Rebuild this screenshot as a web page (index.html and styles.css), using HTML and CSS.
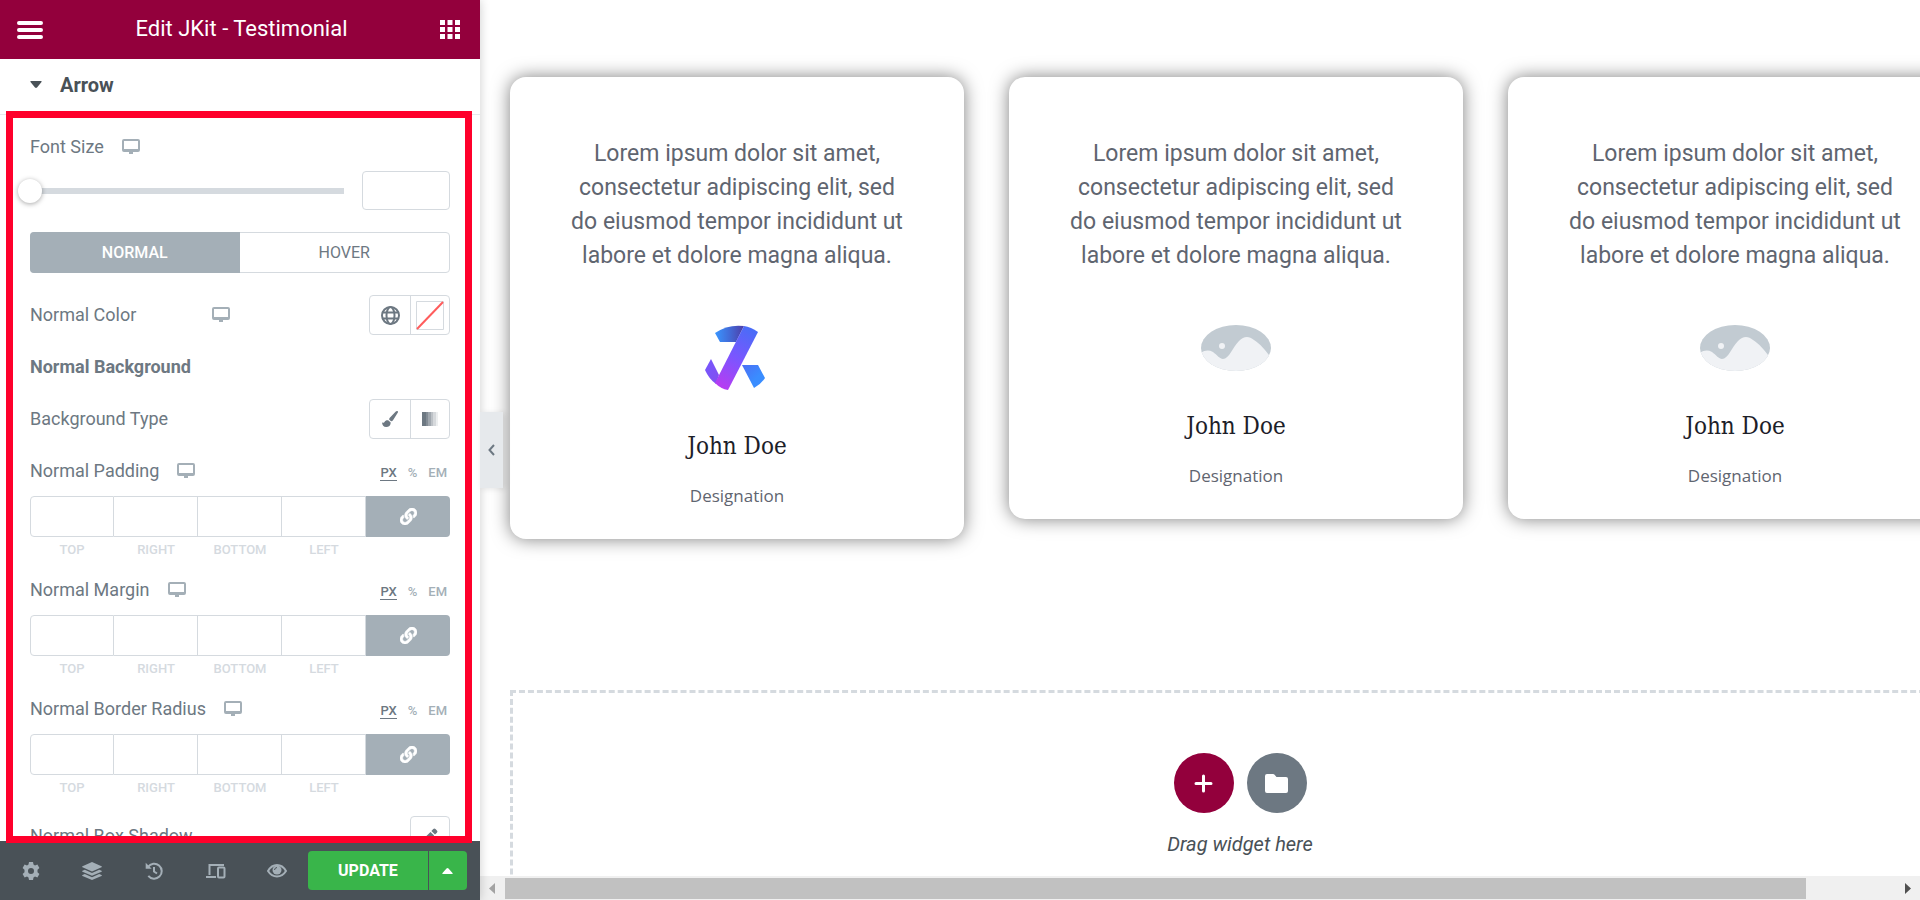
FILE: index.html
```
<!DOCTYPE html>
<html lang="en">
<head>
    <meta charset="UTF-8">
    <meta name="viewport" content="width=device-width, initial-scale=1.0">
    <title>Edit JKit - Testimonial</title>
    <link rel="stylesheet" href="styles.css">
</head>
<body>
    <svg class="sprite" aria-hidden="true">
        <symbol id="i-desktop" viewBox="0 0 18 16">
            <path fill="currentColor" fill-rule="evenodd" d="M2 0h14a2 2 0 0 1 2 2v9a2 2 0 0 1-2 2h-5v2H7v-2H2a2 2 0 0 1-2-2V2a2 2 0 0 1 2-2zm0 2v8h14V2z"/>
        </symbol>
        <symbol id="i-link" viewBox="0 0 512 512">
            <path fill="currentColor" stroke="currentColor" stroke-width="16" d="M326.612 185.391c59.747 59.809 58.927 155.698.36 214.59-.11.12-.24.25-.36.37l-67.2 67.2c-59.27 59.27-155.699 59.262-214.96 0-59.27-59.26-59.27-155.7 0-214.96l37.106-37.106c9.84-9.84 26.786-3.3 27.294 10.606.648 17.722 3.826 35.527 9.69 52.721 1.986 5.822.567 12.262-3.783 16.612l-13.087 13.087c-28.026 28.026-28.905 73.66-1.155 101.96 28.024 28.579 74.086 28.749 102.325.51l67.2-67.19c28.191-28.191 28.073-73.757 0-101.83-3.701-3.694-7.429-6.564-10.341-8.569a16.037 16.037 0 0 1-6.947-12.606c-.396-10.567 3.348-21.456 11.698-29.806l21.054-21.055c5.521-5.521 14.182-6.199 20.584-1.731a152.482 152.482 0 0 1 20.522 17.197zM467.547 44.449c-59.261-59.262-155.69-59.27-214.96 0l-67.2 67.2c-.12.12-.25.25-.36.37-58.566 58.892-59.387 154.781.36 214.59a152.454 152.454 0 0 0 20.521 17.196c6.402 4.468 15.064 3.789 20.584-1.731l21.054-21.055c8.35-8.35 12.094-19.239 11.698-29.806a16.037 16.037 0 0 0-6.947-12.606c-2.912-2.005-6.64-4.875-10.341-8.569-28.073-28.073-28.191-73.639 0-101.83l67.2-67.19c28.239-28.239 74.3-28.069 102.325.51 27.75 28.3 26.872 73.934-1.155 101.96l-13.087 13.087c-4.35 4.35-5.769 10.79-3.783 16.612 5.864 17.194 9.042 34.999 9.69 52.721.509 13.906 17.454 20.446 27.294 10.606l37.106-37.106c59.271-59.259 59.271-155.699.001-214.959z"/>
        </symbol>
        <symbol id="i-placeholder" viewBox="0 0 70 46">
            <clipPath id="oval"><ellipse cx="35" cy="23" rx="35" ry="23"/></clipPath>
            <g clip-path="url(#oval)">
                <path fill="#c2cbd2" d="M0 0h70v46H0z"/>
                <path fill="#f0f2f5" d="M0 28c4-3 8-3 12-1 4 3 7 7 10 7 6 0 10-12 16-18 5-5 10-5 15-1 6 4 11 9 17 18v14H0z"/>
                <circle fill="#f0f2f5" cx="21" cy="21" r="3"/>
            </g>
        </symbol>
    </svg>

    <div class="editor">
        <aside class="panel">
            <header class="panel-header">
                <button class="icon-btn" aria-label="Menu">
                    <svg width="26" height="18" viewBox="0 0 26 18" stroke="currentColor" stroke-width="4" stroke-linecap="round"><path d="M2 2h22M2 9h22M2 16h22"/></svg>
                </button>
                <h1 class="panel-title">Edit JKit - Testimonial</h1>
                <button class="icon-btn" aria-label="Widgets">
                    <svg width="20" height="19" viewBox="0 0 20 19" fill="currentColor"><path d="M0 0h5v5H0zM7.500 0h5v5h-5zM15 0h5v5h-5zM0 7h5v5H0zM7.500 7h5v5h-5zM15 7h5v5h-5zM0 14h5v5H0zM7.500 14h5v5h-5zM15 14h5v5h-5z"/></svg>
                </button>
            </header>

            <button class="section-toggle" aria-expanded="true">
                <svg width="12" height="7" viewBox="0 0 12 7" fill="currentColor"><path d="M1 0h10q1 .3.500 1L7 6.500q-1 .8-2 0L.500 1Q0 .3 1 0z"/></svg>
                Arrow
            </button>

            <div class="controls">
                <div class="control control-slider">
                    <div class="control-head">
                        <label for="fontSize">Font Size</label>
                        <svg class="device"><use href="#i-desktop"/></svg>
                    </div>
                    <div class="slider-row">
                        <input type="range" id="fontSize" class="slider" min="0" max="100" value="0">
                        <input type="text" class="size-input" aria-label="Font size value">
                    </div>
                </div>

                <div class="control tabs">
                    <button class="tab active">NORMAL</button>
                    <button class="tab">HOVER</button>
                </div>

                <div class="control control-inline control-color">
                    <span class="color-label">Normal Color</span>
                    <svg class="device"><use href="#i-desktop"/></svg>
                    <div class="choices">
                        <button class="choice" aria-label="Global color">
                            <svg width="19" height="19" viewBox="0 0 19 19" fill="none" stroke="currentColor" stroke-width="2"><circle cx="9.500" cy="9.500" r="8.500"/><ellipse cx="9.500" cy="9.500" rx="4" ry="8.500"/><path d="M1.500 6.500h16M1.500 12.500h16"/></svg>
                        </button>
                        <button class="choice" aria-label="Pick color">
                            <svg width="28" height="29" viewBox="0 0 28 29" fill="none"><path stroke="#d5dadf" d="M.5.500h27v28H.5z"/><path stroke="#ff5c5c" stroke-width="2" d="M1 28L27 1"/></svg>
                        </button>
                    </div>
                </div>

                <h2 class="control control-heading">Normal Background</h2>

                <div class="control control-inline">
                    <span>Background Type</span>
                    <div class="choices">
                        <button class="choice" aria-label="Classic">
                            <svg width="16" height="16" viewBox="0 0 16 16" fill="currentColor"><path d="M15.700.2c.5.400.3 1 0 1.600L11 9.300c-.6.900-1.300 1.200-2 1L7.300 8.800c-.3-.7-.1-1.300.5-2L13.800.6c.6-.6 1.300-.8 1.900-.4zM6.500 9.500l2.200 2c.1 2.800-1.800 4.500-4.500 4.500C1.500 16 .2 14 0 11.200c.9.700 2 .9 2.500-.2.700-1.400 2.500-2.100 4-1.500z"/></svg>
                        </button>
                        <button class="choice" aria-label="Gradient">
                            <svg width="16" height="14" viewBox="0 0 16 14" fill="currentColor"><path d="M0 0h4v14H0z"/><path opacity=".85" d="M4 0h2v14H4z"/><path opacity=".65" d="M6 0h3v14H6z"/><path opacity=".45" d="M9 0h2v14H9z"/><path opacity=".28" d="M11 0h3v14h-3z"/><path opacity=".12" d="M14 0h2v14h-2z"/></svg>
                        </button>
                    </div>
                </div>

                <div class="control control-dimensions">
                    <div class="control-head">
                        <span>Normal Padding</span>
                        <svg class="device"><use href="#i-desktop"/></svg>
                        <div class="units"><button class="unit active">PX</button><button class="unit">%</button><button class="unit">EM</button></div>
                    </div>
                    <div class="dimensions">
                        <div class="dimension"><input type="text" id="padTop"><label for="padTop">TOP</label></div>
                        <div class="dimension"><input type="text" id="padRight"><label for="padRight">RIGHT</label></div>
                        <div class="dimension"><input type="text" id="padBottom"><label for="padBottom">BOTTOM</label></div>
                        <div class="dimension"><input type="text" id="padLeft"><label for="padLeft">LEFT</label></div>
                        <button class="link-btn" aria-label="Link values"><svg width="17" height="17"><use href="#i-link"/></svg></button>
                    </div>
                </div>

                <div class="control control-dimensions">
                    <div class="control-head">
                        <span>Normal Margin</span>
                        <svg class="device"><use href="#i-desktop"/></svg>
                        <div class="units"><button class="unit active">PX</button><button class="unit">%</button><button class="unit">EM</button></div>
                    </div>
                    <div class="dimensions">
                        <div class="dimension"><input type="text" id="marTop"><label for="marTop">TOP</label></div>
                        <div class="dimension"><input type="text" id="marRight"><label for="marRight">RIGHT</label></div>
                        <div class="dimension"><input type="text" id="marBottom"><label for="marBottom">BOTTOM</label></div>
                        <div class="dimension"><input type="text" id="marLeft"><label for="marLeft">LEFT</label></div>
                        <button class="link-btn" aria-label="Link values"><svg width="17" height="17"><use href="#i-link"/></svg></button>
                    </div>
                </div>

                <div class="control control-dimensions">
                    <div class="control-head">
                        <span>Normal Border Radius</span>
                        <svg class="device"><use href="#i-desktop"/></svg>
                        <div class="units"><button class="unit active">PX</button><button class="unit">%</button><button class="unit">EM</button></div>
                    </div>
                    <div class="dimensions">
                        <div class="dimension"><input type="text" id="radTop"><label for="radTop">TOP</label></div>
                        <div class="dimension"><input type="text" id="radRight"><label for="radRight">RIGHT</label></div>
                        <div class="dimension"><input type="text" id="radBottom"><label for="radBottom">BOTTOM</label></div>
                        <div class="dimension"><input type="text" id="radLeft"><label for="radLeft">LEFT</label></div>
                        <button class="link-btn" aria-label="Link values"><svg width="17" height="17"><use href="#i-link"/></svg></button>
                    </div>
                </div>

                <div class="control control-inline">
                    <span>Normal Box Shadow</span>
                    <div class="choices">
                        <button class="choice" aria-label="Edit shadow">
                            <svg width="16" height="16" viewBox="0 0 16 16" fill="currentColor"><path d="M11.300 1.100a1.600 1.600 0 0 1 2.200 0l1.400 1.400a1.600 1.600 0 0 1 0 2.200L13 6.600 9.400 3zM8.500 3.900l3.600 3.600L4.200 15.400 0 16l.6-4.200z"/></svg>
                        </button>
                    </div>
                </div>
            </div>

            <footer class="panel-footer">
                <button class="tool" aria-label="Settings">
                    <svg width="18" height="18" viewBox="0 0 18 18" fill="currentColor"><path fill-rule="evenodd" d="M7 0h4l.5 2.500 1.500.9 2.400-.8 2 3.400-1.900 1.700v2.600l1.900 1.700-2 3.400-2.400-.8-1.500.9L11 18H7l-.5-2.500-1.500-.9-2.400.8-2-3.400 1.900-1.700V7.700L.6 6l2-3.400 2.400.8 1.500-.9zM9 6a3 3 0 1 0 0 6 3 3 0 0 0 0-6z"/></svg>
                </button>
                <button class="tool" aria-label="Navigator">
                    <svg width="20" height="18" viewBox="0 0 20 18" fill="currentColor"><path d="M10 0l9.500 4.300q.8.500 0 1L10 9.500.5 5.300q-.8-.5 0-1zM2.800 7.700L10 11l7.200-3.300 2.300 1q.8.500 0 1L10 13.800.5 9.700q-.8-.5 0-1zM2.800 12L10 15.200l7.200-3.200 2.300 1q.8.500 0 1L10 18 .5 14q-.8-.5 0-1z"/></svg>
                </button>
                <button class="tool" aria-label="History">
                    <svg width="18" height="18" viewBox="0 0 18 18" fill="none" stroke="currentColor" stroke-width="2"><path d="M3 5a7.500 7.500 0 1 1 .3 8.800"/><path d="M9 5v4.500l3 2"/><path fill="currentColor" stroke="none" d="M.7.700v6h6z"/></svg>
                </button>
                <button class="tool" aria-label="Responsive mode">
                    <svg width="20" height="16" viewBox="0 0 20 16" fill="none" stroke="currentColor" stroke-width="2"><path d="M3.500 12V2h13.500v1M0 14h10"/><rect x="12" y="4.500" width="6.500" height="10" rx="1"/></svg>
                </button>
                <button class="tool" aria-label="Preview">
                    <svg width="20" height="14" viewBox="0 0 20 14"><path fill="none" stroke="currentColor" stroke-width="2" d="M1 7q3.500-6 9-6t9 6q-3.500 5.500-9 5.500T1 7z"/><circle cx="10" cy="6" r="4.500" fill="currentColor"/><path fill="none" stroke="#495157" d="M7.500 6Q7.700 3.700 10 3.500"/></svg>
                </button>
                <div class="publish">
                    <button class="update">UPDATE</button>
                    <button class="update-more" aria-label="Save options"><svg width="11" height="6" viewBox="0 0 11 6" fill="currentColor"><path d="M1 6h9q1.300-.3.500-1L6.500.500q-1-.8-2 0L.500 5Q-.3 5.700 1 6z"/></svg></button>
                </div>
            </footer>

            <div class="highlight"></div>
            <button class="collapse" aria-label="Hide panel">
                <svg width="7" height="12" viewBox="0 0 7 12" fill="none" stroke="currentColor" stroke-width="2"><path d="M6 1L1.500 6 6 11"/></svg>
            </button>
        </aside>

        <main class="preview">
            <div class="viewport">
                <div class="canvas">
                    <section class="testimonials">
                        <article class="testimonial">
                            <p class="quote">Lorem ipsum dolor sit amet, consectetur adipiscing elit, sed do eiusmod tempor incididunt ut labore et dolore magna aliqua.</p>
                            <svg class="avatar" width="66" height="66" viewBox="-1 0 66 66">
                                <defs>
                                    <linearGradient id="bar" x1="0.700" y1="0" x2="0.300" y2="1"><stop offset="0" stop-color="#4a6cf7"/><stop offset=".5" stop-color="#7a56ff"/><stop offset="1" stop-color="#b53df2"/></linearGradient>
                                    <linearGradient id="cap"><stop offset="0" stop-color="#3a96ff"/><stop offset=".5" stop-color="#426bd8"/><stop offset="1" stop-color="#4e3da8"/></linearGradient>
                                    <linearGradient id="hook" x1="0" y1="0" x2="1" y2="1"><stop offset="0" stop-color="#7657ff"/><stop offset="1" stop-color="#8350ee"/></linearGradient>
                                    <linearGradient id="leg" x1="0" y1="0" x2="1" y2="1"><stop offset="0" stop-color="#4c6ef5"/><stop offset=".6" stop-color="#3a8dff"/></linearGradient>
                                </defs>
                                <path fill="url(#cap)" d="M10 8Q23-1 39 1l-8 16H15z"/>
                                <path fill="url(#hook)" d="M6 34l8 16-3 9Q4 54 0 45z"/>
                                <path fill="url(#bar)" d="M39 1q7 1 14 6L23 65q-7-1-13-7z"/>
                                <path fill="url(#leg)" d="M37 40h16l7 13q-4 6-11 10z"/>
                            </svg>
                            <h3 class="name">John Doe</h3>
                            <p class="designation">Designation</p>
                        </article>
                        <article class="testimonial">
                            <p class="quote">Lorem ipsum dolor sit amet, consectetur adipiscing elit, sed do eiusmod tempor incididunt ut labore et dolore magna aliqua.</p>
                            <svg class="avatar" width="70" height="46"><use href="#i-placeholder"/></svg>
                            <h3 class="name">John Doe</h3>
                            <p class="designation">Designation</p>
                        </article>
                        <article class="testimonial">
                            <p class="quote">Lorem ipsum dolor sit amet, consectetur adipiscing elit, sed do eiusmod tempor incididunt ut labore et dolore magna aliqua.</p>
                            <svg class="avatar" width="70" height="46"><use href="#i-placeholder"/></svg>
                            <h3 class="name">John Doe</h3>
                            <p class="designation">Designation</p>
                        </article>
                    </section>

                    <section class="drop-zone">
                        <div class="drop-actions">
                            <button class="round add" aria-label="Add new section"><svg width="19" height="19" viewBox="0 0 19 19" stroke="currentColor" stroke-width="3" stroke-linecap="round"><path d="M9.500 2v15M2 9.500h15"/></svg></button>
                            <button class="round folder" aria-label="Add template"><svg width="23" height="19" viewBox="0 0 23 19" fill="currentColor"><path d="M2 0h6q1 0 1.600.8L11.500 3H21q2 0 2 2v12q0 2-2 2H2q-2 0-2-2V2q0-2 2-2z"/></svg></button>
                        </div>
                        <p class="drop-text">Drag widget here</p>
                    </section>
                </div>
            </div>
            <div class="scrollbar">
                <svg class="arrow-left" width="6" height="11" viewBox="0 0 6 11"><path d="M6 0v11L0 5.500z"/></svg>
                <div class="track"><div class="thumb"></div></div>
                <svg class="arrow-right" width="6" height="11" viewBox="0 0 6 11"><path d="M0 0v11l6-5.500z"/></svg>
            </div>
        </main>
    </div>
</body>
</html>
```
FILE: styles.css
```
:root {
    --brand: #93003c;
    --text: #6d7882;
    --dark: #495157;
    --muted: #a4afb7;
    --line: #d5dadf;
}

* {
    box-sizing: border-box;
}

body {
    margin: 0;
    font-family: Roboto, "Liberation Sans", sans-serif;
    color: var(--text);
    background-color: #fff;
}

h1, h2, h3, p {
    margin: 0;
}

button {
    margin: 0;
    padding: 0;
    border: 0;
    background: none;
    font: inherit;
    color: inherit;
    cursor: pointer;
}

svg {
    display: block;
    flex: none;
}

.sprite {
    position: absolute;
    width: 0;
    height: 0;
}

.editor {
    display: flex;
    height: 100vh;
    overflow: hidden;
}

/* Left panel */
.panel {
    position: relative;
    z-index: 1;
    display: flex;
    flex-direction: column;
    flex: none;
    width: 480px;
    background-color: #fff;
    box-shadow: 0 0 10px rgba(0, 0, 0, 0.2);
}

.panel-header {
    display: flex;
    align-items: center;
    justify-content: space-between;
    flex: none;
    height: 59px;
    padding: 0 20px 0 17px;
    background-color: var(--brand);
    color: #fff;
}

.panel-title {
    font-size: 22px;
    font-weight: 400;
    line-height: 58px;
    height: 59px;
}

.section-toggle {
    display: flex;
    align-items: center;
    gap: 18px;
    flex: none;
    height: 56px;
    padding: 0 30px 4px;
    border-bottom: 1px solid #e6e9ec;
    color: var(--dark);
    font-size: 20px;
    font-weight: 700;
}

.controls {
    flex: 1;
    min-height: 0;
    overflow: hidden;
    padding: 20px 30px 0;
    font-size: 18px;
    line-height: 24px;
}

.control {
    margin-bottom: 20px;
}

.control-head {
    display: flex;
    align-items: center;
    height: 24px;
}

.device {
    width: 18px;
    height: 16px;
    color: var(--muted);
}

.control-head .device {
    margin-left: 18px;
}

.control-slider,
.tabs {
    margin-bottom: 22px;
}

.slider-row {
    display: flex;
    align-items: center;
    gap: 18px;
    margin-top: 12px;
}

.slider {
    -webkit-appearance: none;
    appearance: none;
    flex: 1;
    min-width: 0;
    height: 24px;
    margin: 0 0 0 -12px;
    background: linear-gradient(var(--line), var(--line)) right center / calc(100% - 12px) 6px no-repeat;
    border-radius: 3px;
}

.slider::-webkit-slider-thumb {
    -webkit-appearance: none;
    width: 24px;
    height: 24px;
    border-radius: 50%;
    background-color: #fff;
    box-shadow: 0 1px 5px rgba(0, 0, 0, 0.35);
}

.size-input,
.dimension input {
    border: 1px solid var(--line);
    background-color: #fff;
    color: var(--text);
    font: inherit;
    text-align: center;
}

.size-input {
    width: 88px;
    height: 39px;
    border-radius: 4px;
}

.tabs {
    display: flex;
    height: 41px;
    border: 1px solid var(--line);
    border-radius: 4px;
}

.tab {
    flex: 1;
    font-size: 16px;
}

.tab.active {
    margin: -1px 0 -1px -1px;
    border-radius: 4px 0 0 4px;
    background-color: var(--muted);
    color: #fff;
    font-weight: 500;
}

.control-inline {
    display: flex;
    align-items: center;
}

.color-label {
    width: 182px;
}

.choices {
    display: flex;
    margin-left: auto;
    border: 1px solid var(--line);
    border-radius: 4px;
}

.choice {
    display: flex;
    align-items: center;
    justify-content: center;
    width: 38px;
    height: 38px;
}

.choice:first-child:not(:last-child) {
    width: 41px;
    border-right: 1px solid var(--line);
}

.control-heading {
    font-size: 18px;
    font-weight: 700;
}

.units {
    display: flex;
    gap: 11px;
    margin: 4px 3px 0 auto;
    color: var(--muted);
    font-size: 13px;
    font-weight: 500;
    line-height: 15px;
}

.unit {
    border-bottom: 1px solid transparent;
}

.unit.active {
    border-color: var(--text);
    color: var(--text);
}

.control-dimensions {
    margin-bottom: 18px;
}

.dimensions {
    display: flex;
    margin-top: 13px;
}

.dimension {
    display: flex;
    flex-direction: column;
    gap: 3px;
    flex: 1;
    min-width: 0;
    text-align: center;
    color: var(--line);
    font-size: 13px;
    font-weight: 500;
    line-height: 20px;
}

.dimension input {
    width: 100%;
    height: 41px;
    border-left-width: 0;
}

.dimension:first-child input {
    border-left-width: 1px;
    border-radius: 4px 0 0 4px;
}

.link-btn {
    display: flex;
    align-items: center;
    justify-content: center;
    flex: 1;
    height: 41px;
    border-radius: 0 4px 4px 0;
    background-color: var(--muted);
    color: #fff;
}

.panel-footer {
    display: flex;
    align-items: center;
    flex: none;
    height: 59px;
    padding-right: 13px;
    background-color: var(--dark);
    color: var(--muted);
}

.tool {
    display: flex;
    align-items: center;
    justify-content: center;
    flex: 1;
    height: 59px;
}

.publish {
    display: flex;
    gap: 1px;
    height: 39px;
    color: #fff;
}

.update,
.update-more {
    display: flex;
    align-items: center;
    justify-content: center;
    background-color: #39b54a;
}

.update {
    width: 120px;
    border-radius: 4px 0 0 4px;
    font-size: 16px;
    font-weight: 700;
}

.update-more {
    width: 38px;
    border-radius: 0 4px 4px 0;
}

/* Frame laid over the open section */
.highlight {
    position: absolute;
    top: 111px;
    right: 8px;
    bottom: 57px;
    left: 6px;
    border: 7px solid #ff002b;
    pointer-events: none;
}

.collapse {
    position: absolute;
    top: 50%;
    left: 100%;
    display: flex;
    align-items: center;
    justify-content: center;
    width: 23px;
    height: 76px;
    margin-top: -38px;
    background-color: #e6e9ec;
    color: var(--text);
    box-shadow: 2px 1px 6px rgba(0, 0, 0, 0.1);
}

/* Page preview */
.preview {
    display: flex;
    flex-direction: column;
    flex: 1;
    min-width: 0;
}

.viewport {
    flex: 1;
    min-height: 0;
    overflow: hidden;
}

.canvas {
    width: calc(100% + 80px);
    padding: 77px 30px 0;
}

.testimonials {
    display: grid;
    grid-template-columns: repeat(3, 1fr);
    align-items: start;
    gap: 45px;
    margin-right: 8px;
}

.testimonial {
    display: flex;
    flex-direction: column;
    align-items: center;
    padding: 60px 60px 29px;
    border-radius: 16px;
    background-color: #fff;
    box-shadow: 0 0 18px rgba(0, 0, 0, 0.5);
    text-align: center;
}

.quote {
    color: #5f6570;
    font-size: 23px;
    line-height: 34px;
}

.avatar {
    margin-top: 52px;
}

.name {
    margin-top: 39px;
    color: #1c2028;
    font-family: "Roboto Slab", "DejaVu Serif Condensed", "DejaVu Serif", serif;
    font-size: 24px;
    font-weight: 400;
    line-height: 32px;
}

.designation {
    margin-top: 20px;
    color: #5f6570;
    font-family: "Segoe UI", "Open Sans", "Noto Sans", sans-serif;
    font-size: 17px;
    line-height: 28px;
}

.drop-zone {
    margin-top: 151px;
    padding: 60px 0;
    border: 3px dashed var(--line);
    text-align: center;
}

.drop-actions {
    display: flex;
    justify-content: center;
    gap: 13px;
}

.round {
    display: flex;
    align-items: center;
    justify-content: center;
    width: 60px;
    height: 60px;
    border-radius: 50%;
    color: #fff;
}

.add {
    background-color: var(--brand);
}

.folder {
    background-color: var(--text);
}

.drop-text {
    margin-top: 19px;
    color: var(--dark);
    font-size: 20px;
    font-style: italic;
    line-height: 24px;
}

.scrollbar {
    display: flex;
    align-items: center;
    justify-content: space-between;
    gap: 10px;
    flex: none;
    height: 24px;
    padding: 0 9px;
    background-color: #f0f0f0;
}

.track {
    flex: 1;
    height: 21px;
}

.thumb {
    width: calc(100% - 89px);
    height: 100%;
    background-color: #c1c1c1;
}

.arrow-left {
    fill: #a3a3a3;
}

.arrow-right {
    fill: #505050;
}
```
